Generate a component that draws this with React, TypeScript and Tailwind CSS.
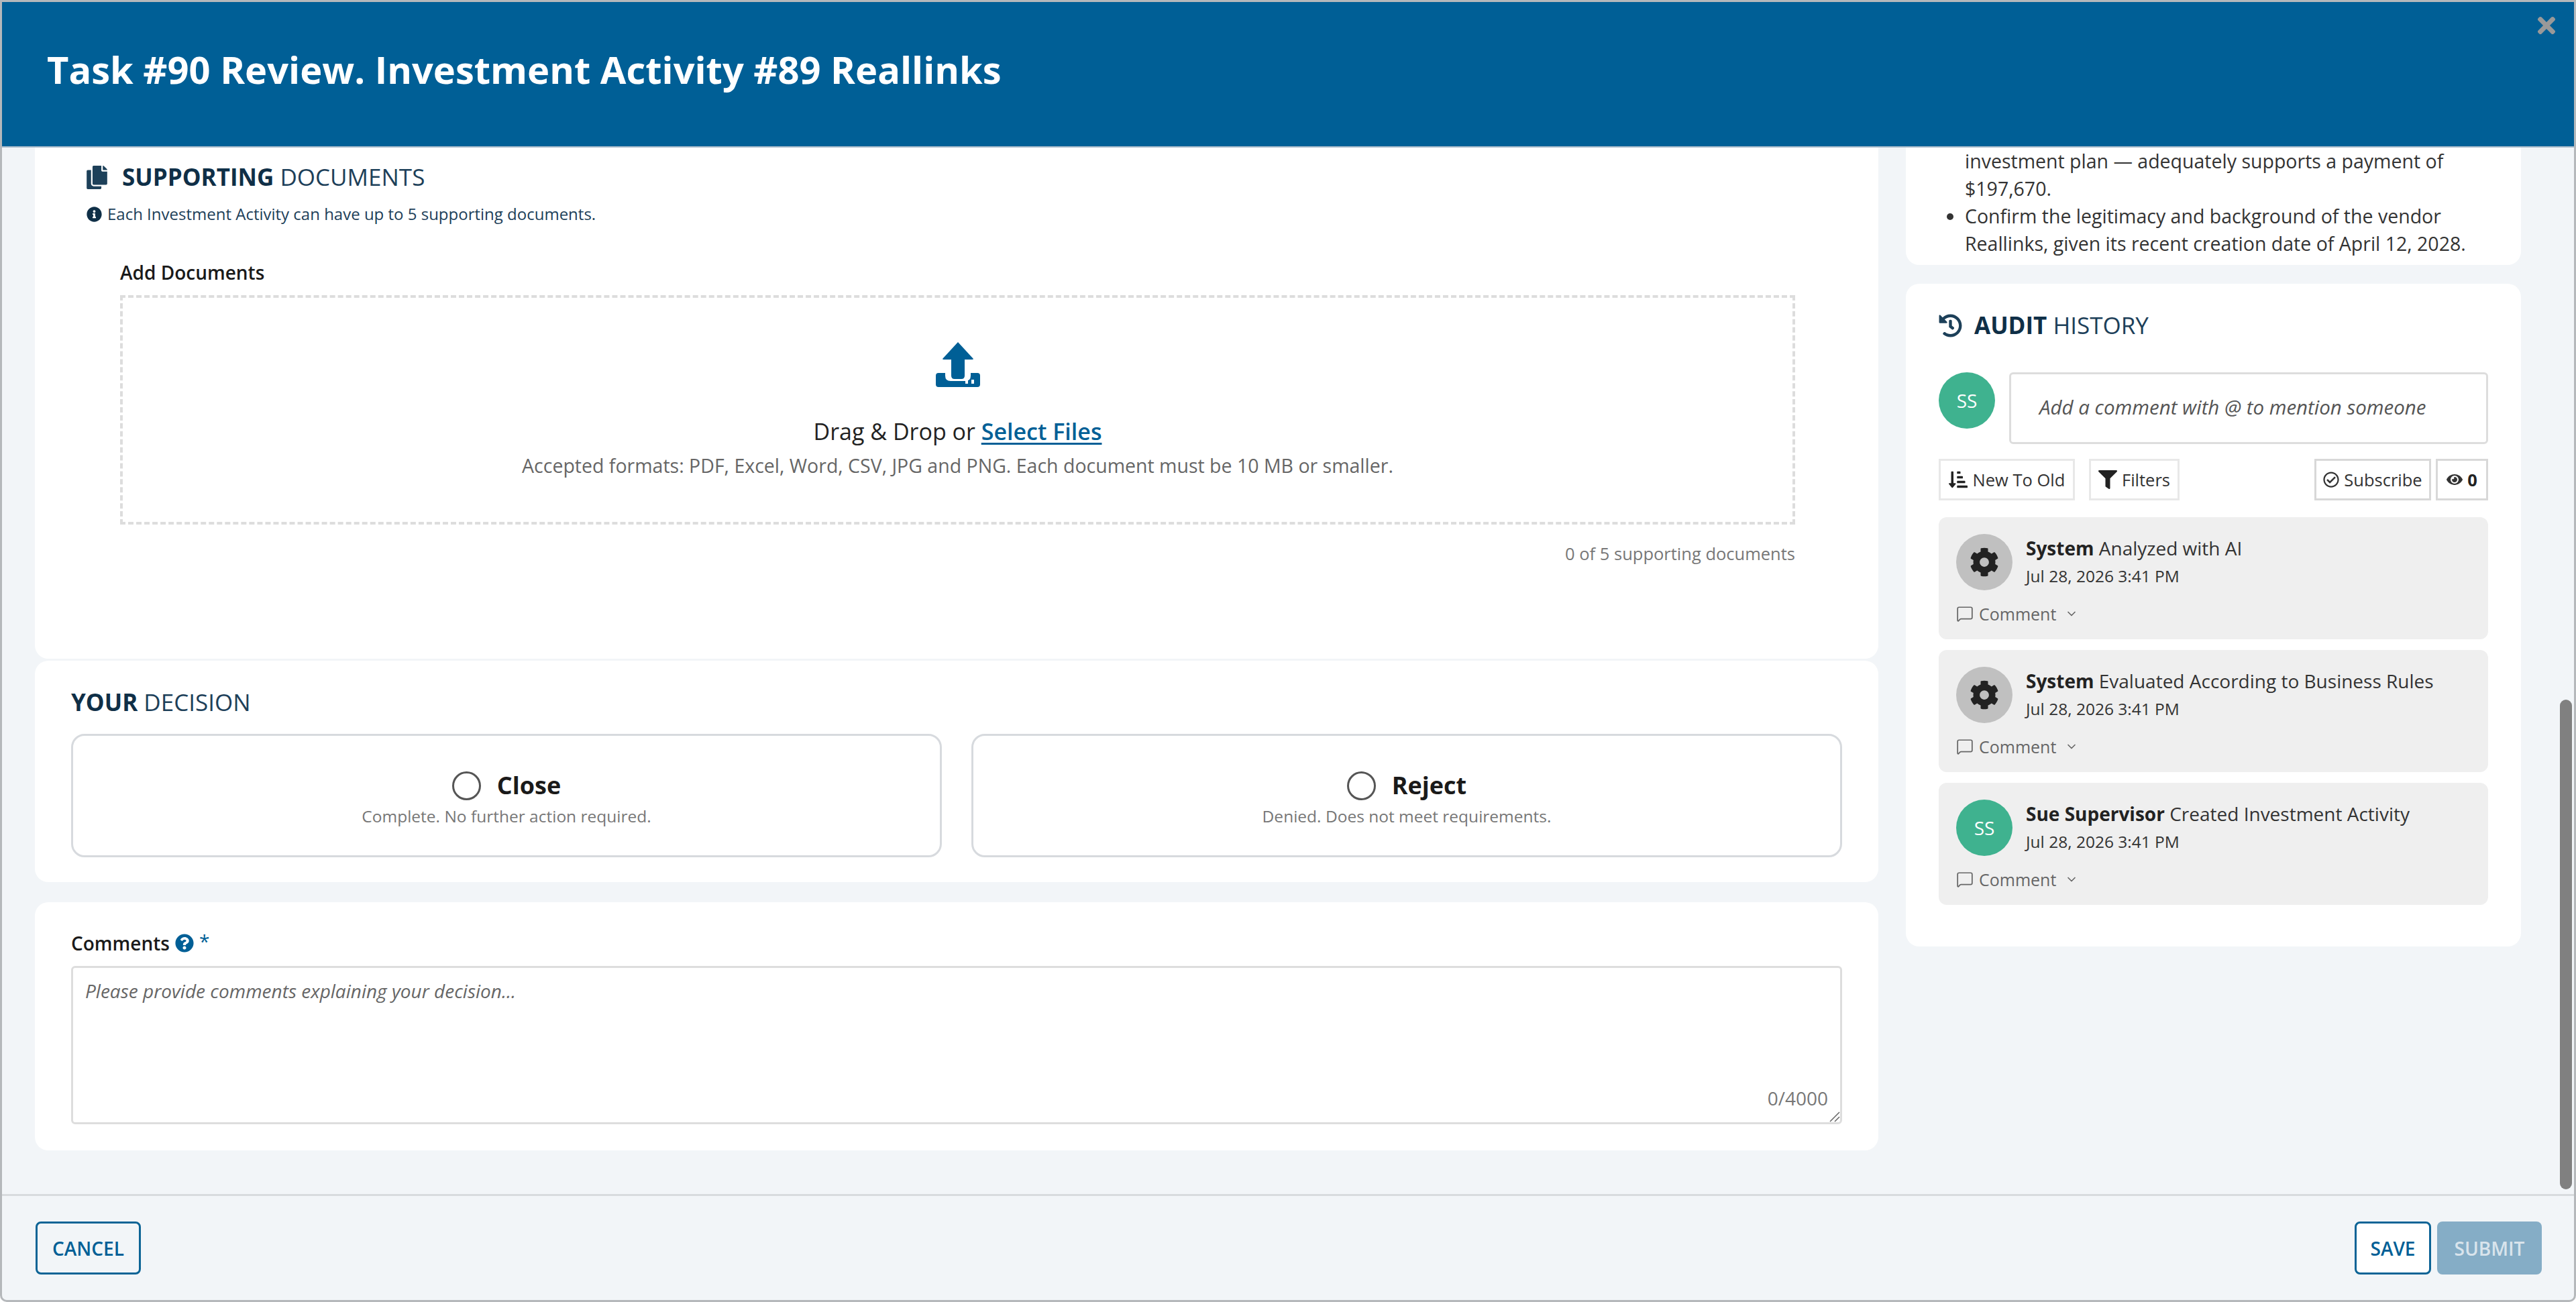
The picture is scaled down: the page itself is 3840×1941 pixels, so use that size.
import { ChevronDown, MessageSquare } from "lucide-react"
import {
  FaCog,
  FaCopy,
  FaEye,
  FaFilter,
  FaHistory,
  FaInfoCircle,
  FaQuestionCircle,
  FaRegCheckCircle,
  FaSortAmountDownAlt,
  FaTimes,
} from "react-icons/fa"

const font = { fontFamily: '"Open Sans", sans-serif' }

const activity = [
  { who: "System", what: "Analyzed with AI", system: true },
  { who: "System", what: "Evaluated According to Business Rules", system: true },
  { who: "Sue Supervisor", what: "Created Investment Activity", system: false },
]

function SectionTitle({ strong, rest }: { strong: string; rest: string }) {
  return (
    <h2 className="text-[35px] leading-[48px] text-[#1d4059]">
      <span className="font-bold text-[#0f2f47]">{strong}</span> {rest}
    </h2>
  )
}

function UploadIcon() {
  return (
    <svg viewBox="0 0 66 67" className="h-[67px] w-[66px] fill-[#005f96]">
      <path d="M33 0 L56 25 Q56 26 54 26 L43 26 L43 50 Q43 55 38 55 L28 55 Q23 55 23 50 L23 26 L12 26 Q10 26 10 25 Z" />
      <path d="M0 50 Q0 46 4 46 L14 46 L14 50 Q14 58 22 58 L44 58 Q52 58 52 50 L52 46 L62 46 Q66 46 66 50 L66 63 Q66 67 62 67 L4 67 Q0 67 0 63 Z" />
      <rect x="44" y="56" width="4" height="6" fill="#fff" />
      <rect x="53" y="56" width="4" height="6" fill="#fff" />
    </svg>
  )
}

function DecisionOption({ label, hint }: { label: string; hint: string }) {
  return (
    <div className="flex h-[184px] flex-col items-center rounded-[20px] border-[3px] border-[#d7dade] bg-white pt-[50px]">
      <div className="flex items-center gap-[24px]">
        <span className="h-[43px] w-[43px] rounded-full border-[3px] border-[#555]" />
        <span className="text-[36px] leading-[48px] font-bold text-[#1a1a1a]">{label}</span>
      </div>
      <p className="mt-[5px] text-[24.5px] leading-[34px] text-[#777]">{hint}</p>
    </div>
  )
}

function ActivityCard({ who, what, system }: { who: string; what: string; system: boolean }) {
  return (
    <div className="h-[182px] rounded-[12px] bg-[#efefef] pt-[25px] pl-[26px]">
      <div className="flex gap-[20px]">
        {system ? (
          <div className="flex h-[84px] w-[84px] items-center justify-center rounded-full bg-[#c0c0c0]">
            <FaCog className="h-[44px] w-[44px] text-[#222]" />
          </div>
        ) : (
          <div className="flex h-[84px] w-[84px] items-center justify-center rounded-full bg-[#3fb28f] text-[28px] text-white">
            SS
          </div>
        )}
        <div>
          <p className="text-[28px] leading-[42px] text-[#333]">
            <span className="font-bold text-[#222]">{who}</span> {what}
          </p>
          <p className="text-[24.5px] leading-[42px] text-[#333]">Jul 28, 2026 3:41 PM</p>
        </div>
      </div>
      <div className="mt-[18px] flex items-center text-[25px] leading-[34px] text-[#666]">
        <MessageSquare className="mr-[8px] h-[26px] w-[26px]" strokeWidth={1.6} />
        Comment
        <ChevronDown className="ml-[13px] h-[20px] w-[20px]" strokeWidth={2} />
      </div>
    </div>
  )
}

export default function App() {
  return (
    <div style={font} className="relative flex h-[1941px] w-[3840px] flex-col overflow-hidden rounded-b-[10px] border-x-[3px] border-y-[3px] border-x-[#b5b8bb] border-y-[#b5b8bb] bg-[#f2f5f8]">
      {/* Header */}
      <header className="flex h-[217px] shrink-0 items-center border-b-[2px] border-[#a9bccb] bg-[#005f96] pb-[15px] pl-[67px]">
        <h1 className="text-[56px] leading-[72px] font-bold text-white">Task #90 Review. Investment Activity #89 Reallinks</h1>
      </header>
      <FaTimes className="absolute top-[16px] right-[25px] h-[38px] w-[32px] text-[#999]" />

      {/* Body */}
      <div className="relative flex min-h-0 flex-1 overflow-hidden pr-[79px] pl-[49px]">
        <div className="w-[2748px] shrink-0">
          <section className="h-[762px] rounded-b-[20px] bg-white pt-[20px] pl-[77px]">
            <div className="flex items-center">
              <FaCopy className="mr-[22px] h-[35px] w-[31px] text-[#1d4059]" />
              <SectionTitle strong="SUPPORTING" rest="DOCUMENTS" />
            </div>
            <div className="mt-[14px] flex items-center text-[24px] leading-[34px] text-[#1d4059]">
              <FaInfoCircle className="mr-[8px] h-[23px] w-[23px] text-[#0f2f47]" />
              Each Investment Activity can have up to 5 supporting documents.
            </div>
            <div className="mt-[50px] ml-[50px] w-[2497px]">
              <p className="text-[28px] leading-[40px] font-semibold text-[#1a1a1a]">Add Documents</p>
              <div className="mt-[14px] flex h-[342px] flex-col items-center border-[4px] border-dashed border-[#ddd] pt-[66px]">
                <UploadIcon />
                <p className="mt-[43px] text-[34px] leading-[46px] text-[#222]">
                  Drag &amp; Drop or{" "}
                  <span className="font-semibold text-[#005f96] underline underline-offset-[4px]">Select Files</span>
                </p>
                <p className="mt-[8px] text-[28.5px] leading-[40px] text-[#666]">
                  Accepted formats: PDF, Excel, Word, CSV, JPG and PNG. Each document must be 10 MB or smaller.
                </p>
              </div>
              <p className="mt-[25px] text-right text-[25.5px] leading-[36px] text-[#777]">0 of 5 supporting documents</p>
            </div>
          </section>

          <section className="mt-[3px] h-[330px] rounded-[20px] bg-white px-[54px] pt-[38px]">
            <SectionTitle strong="YOUR" rest="DECISION" />
            <div className="mt-[23px] grid grid-cols-2 gap-[44px]">
              <DecisionOption label="Close" hint="Complete. No further action required." />
              <DecisionOption label="Reject" hint="Denied. Does not meet requirements." />
            </div>
          </section>

          <section className="mt-[30px] h-[370px] rounded-[20px] bg-white px-[54px] pt-[41px]">
            <div className="flex items-center text-[28px] leading-[40px] font-semibold text-[#1a1a1a]">
              Comments
              <FaQuestionCircle className="mx-[8px] h-[28px] w-[28px] text-[#005f96]" />
              <span className="-mt-[6px] font-normal text-[#005f96]">*</span>
            </div>
            <div className="relative mt-[14px] h-[236px] rounded-[6px] border-[3px] border-[#ddd] pt-[14px] pl-[18px] text-[28px] leading-[40px] text-[#666] italic">
              Please provide comments explaining your decision...
              <span className="absolute right-[18px] bottom-[16px] text-[#777] not-italic">0/4000</span>
              <svg viewBox="0 0 18 18" className="absolute right-0 bottom-0 h-[18px] w-[18px] stroke-[#666]">
                <path d="M17 3 L3 17 M17 10 L10 17" strokeWidth="1.5" />
              </svg>
            </div>
          </section>
        </div>

        <aside className="ml-[41px] w-[917px] shrink-0">
          <section className="h-[175px] rounded-b-[20px] bg-white pr-[20px] pl-[39px] text-[28.5px] leading-[41px] text-[#333]">
            <ul className="list-disc pl-[49px]">
              <li className="list-none">investment plan — adequately supports a payment of $197,670.</li>
              <li>Confirm the legitimacy and background of the vendor Reallinks, given its recent creation date of April 12, 2028.</li>
            </ul>
          </section>

          <section className="mt-[28px] h-[988px] rounded-[20px] bg-white px-[49px] pt-[38px]">
            <div className="flex items-center">
              <FaHistory className="mr-[18px] h-[35px] w-[35px] text-[#1d4059]" />
              <SectionTitle strong="AUDIT" rest="HISTORY" />
            </div>
            <div className="mt-[46px] flex gap-[21px]">
              <div className="flex h-[84px] w-[84px] shrink-0 items-center justify-center rounded-full bg-[#3fb28f] text-[28px] text-white">
                SS
              </div>
              <div className="flex h-[107px] flex-1 items-start rounded-[6px] border-[3px] border-[#ddd] pt-[29px] pl-[42px] text-[29.5px] leading-[40px] text-[#555] italic">
                Add a comment with @ to mention someone
              </div>
            </div>
            <div className="mt-[22px] flex text-[25.5px] text-[#333]">
              <div className="flex h-[62px] w-[203px] items-center justify-center gap-[8px] border-[3px] border-[#e8e8e8]">
                <FaSortAmountDownAlt className="h-[28px] w-[28px] text-[#222]" />
                New To Old
              </div>
              <div className="ml-[21px] flex h-[62px] w-[135px] items-center justify-center gap-[7px] border-[3px] border-[#e8e8e8]">
                <FaFilter className="h-[28px] w-[28px] text-[#222]" />
                Filters
              </div>
              <div className="ml-auto flex h-[62px] w-[174px] items-center justify-center gap-[7px] border-[3px] border-[#d8d8d8]">
                <FaRegCheckCircle className="h-[24px] w-[24px] text-[#333]" />
                Subscribe
              </div>
              <div className="ml-[7px] flex h-[62px] w-[78px] items-center justify-center gap-[7px] border-[3px] border-[#d8d8d8] font-bold text-[#222]">
                <FaEye className="h-[24px] w-[24px] font-normal text-[#333]" />
                0
              </div>
            </div>
            <div className="mt-[25px] flex flex-col gap-[16px]">
              {activity.map((a) => (
                <ActivityCard key={a.what} {...a} />
              ))}
            </div>
          </section>
        </aside>

        {/* Scrollbar thumb */}
        <div className="absolute top-[823px] right-[3px] h-[730px] w-[18px] rounded-full bg-[#808080]" />
      </div>

      {/* Footer */}
      <footer className="flex h-[158px] shrink-0 items-center border-t-[3px] border-[#d8dbde] pr-[48px] pl-[50px] text-[28px] font-semibold">
        <button className="h-[79px] w-[157px] rounded-[8px] border-[3px] border-[#0d6496] text-[#005f96]">CANCEL</button>
        <button className="ml-auto h-[79px] w-[114px] rounded-[8px] border-[3px] border-[#0d6496] bg-white text-[#005f96]">SAVE</button>
        <button className="ml-[9px] h-[79px] w-[156px] rounded-[8px] bg-[#85adc6] text-[#d9e4ec]">SUBMIT</button>
      </footer>
    </div>
  )
}
